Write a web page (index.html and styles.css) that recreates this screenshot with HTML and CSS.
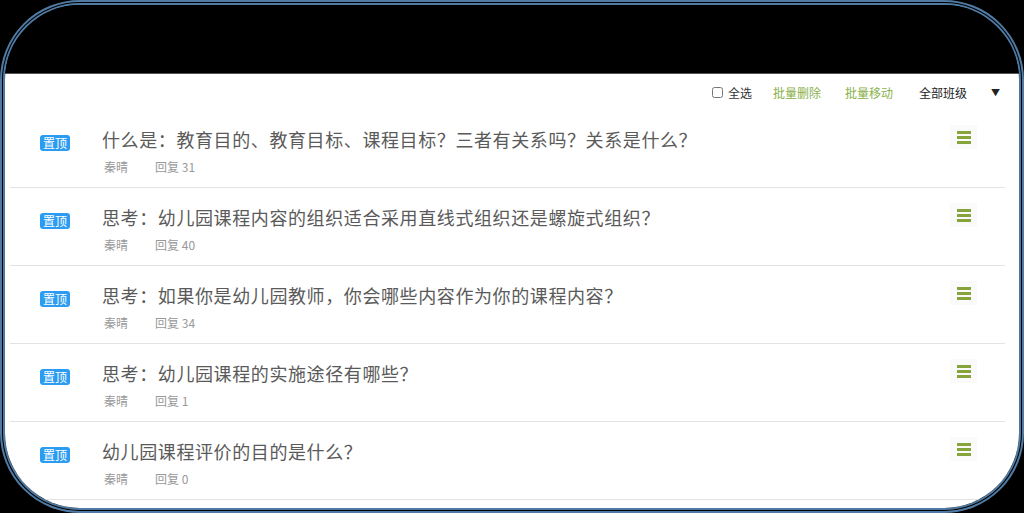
FILE: index.html
```html
<!DOCTYPE html>
<html lang="zh-CN">
<head>
    <meta charset="UTF-8">
    <meta name="viewport" content="width=device-width, initial-scale=1.0">
    <title>话题列表</title>
    <link rel="stylesheet" href="styles.css">
</head>
<body>
    <div class="frame">
        <div class="topbar"></div>
        <div class="content">
            <div class="toolbar">
                <label class="check-all"><input type="checkbox"> 全选</label>
                <a class="tool-link" href="#">批量删除</a>
                <a class="tool-link" href="#">批量移动</a>
                <div class="class-select">
                    <span>全部班级</span>
                    <span class="arrow">&#9660;</span>
                </div>
            </div>

            <ul class="topic-list">
                <li class="topic">
                    <span class="badge">置顶</span>
                    <div class="topic-main">
                        <div class="topic-title">什么是：教育目的、教育目标、课程目标？三者有关系吗？关系是什么？</div>
                        <div class="topic-meta"><span class="author">秦晴</span><span>回复 31</span></div>
                    </div>
                    <span class="menu-btn"><i></i><i></i><i></i></span>
                </li>
                <li class="topic">
                    <span class="badge">置顶</span>
                    <div class="topic-main">
                        <div class="topic-title">思考：幼儿园课程内容的组织适合采用直线式组织还是螺旋式组织？</div>
                        <div class="topic-meta"><span class="author">秦晴</span><span>回复 40</span></div>
                    </div>
                    <span class="menu-btn"><i></i><i></i><i></i></span>
                </li>
                <li class="topic">
                    <span class="badge">置顶</span>
                    <div class="topic-main">
                        <div class="topic-title">思考：如果你是幼儿园教师，你会哪些内容作为你的课程内容？</div>
                        <div class="topic-meta"><span class="author">秦晴</span><span>回复 34</span></div>
                    </div>
                    <span class="menu-btn"><i></i><i></i><i></i></span>
                </li>
                <li class="topic">
                    <span class="badge">置顶</span>
                    <div class="topic-main">
                        <div class="topic-title">思考：幼儿园课程的实施途径有哪些？</div>
                        <div class="topic-meta"><span class="author">秦晴</span><span>回复 1</span></div>
                    </div>
                    <span class="menu-btn"><i></i><i></i><i></i></span>
                </li>
                <li class="topic">
                    <span class="badge">置顶</span>
                    <div class="topic-main">
                        <div class="topic-title">幼儿园课程评价的目的是什么？</div>
                        <div class="topic-meta"><span class="author">秦晴</span><span>回复 0</span></div>
                    </div>
                    <span class="menu-btn"><i></i><i></i><i></i></span>
                </li>
            </ul>
        </div>
    </div>
</body>
</html>
```

FILE: styles.css
```css
/* page */
body {
    margin: 0;
    padding: 0;
    background-color: #000;
    font-family: "Noto Sans CJK SC", "Noto Sans", sans-serif;
    color: #333;
}

/* rounded window frame */
.frame {
    height: 513px;
    box-sizing: border-box;
    border: 5px double #4f7aa3;
    border-radius: 80px;
    overflow: hidden;
    display: flex;
    flex-direction: column;
    background-color: #000;
}
.topbar {
    height: 68px;
    flex-shrink: 0;
    background-color: #000;
    border-bottom: 1px solid #555;
}
.content {
    flex: 1;
    background-color: #fff;
    padding: 0 14px 0 5px;
}

/* toolbar */
.toolbar {
    height: 36px;
    display: flex;
    align-items: center;
    justify-content: flex-end;
    font-size: 12px;
    padding-right: 5px;
}
.check-all {
    display: flex;
    align-items: center;
    color: #333;
    margin-right: 21px;
}
.check-all input {
    width: 11px;
    height: 11px;
    margin: 0 5px 0 0;
}
.tool-link {
    color: #8ab04a;
    text-decoration: none;
    margin-right: 24px;
}
.class-select {
    display: flex;
    align-items: center;
    color: #222;
    margin-left: 2px;
}
.class-select .arrow {
    font-size: 9px;
    margin-left: 24px;
}

/* topic list */
.topic-list {
    list-style-type: none;
    margin: 0;
    padding: 0;
}
.topic {
    height: 78px;
    box-sizing: border-box;
    border-bottom: 1px solid #e3e3e3;
    display: flex;
    align-items: flex-start;
}
.badge {
    margin: 25px 32px 0 30px;
    background-color: #2b9cf2;
    color: #fff;
    font-size: 12px;
    line-height: 16px;
    padding: 0 3px;
    border-radius: 3px;
}
.topic-main {
    flex: 1;
    padding-top: 16px;
}
.topic-title {
    font-size: 18px;
    line-height: 26px;
    color: #5a5a5a;
    letter-spacing: 0.6px;
}
.topic-meta {
    margin-top: 6px;
    font-size: 12px;
    line-height: 18px;
    color: #999;
    padding-left: 2px;
}
.topic-meta .author {
    margin-right: 27px;
}
.menu-btn {
    margin: 15px 28px 0 0;
    width: 27px;
    height: 24px;
    background-color: #fafafa;
    display: flex;
    flex-direction: column;
    justify-content: center;
    align-items: center;
    gap: 2px;
}
.menu-btn i {
    display: block;
    width: 14px;
    height: 3px;
    background-color: #86a33c;
}
```
